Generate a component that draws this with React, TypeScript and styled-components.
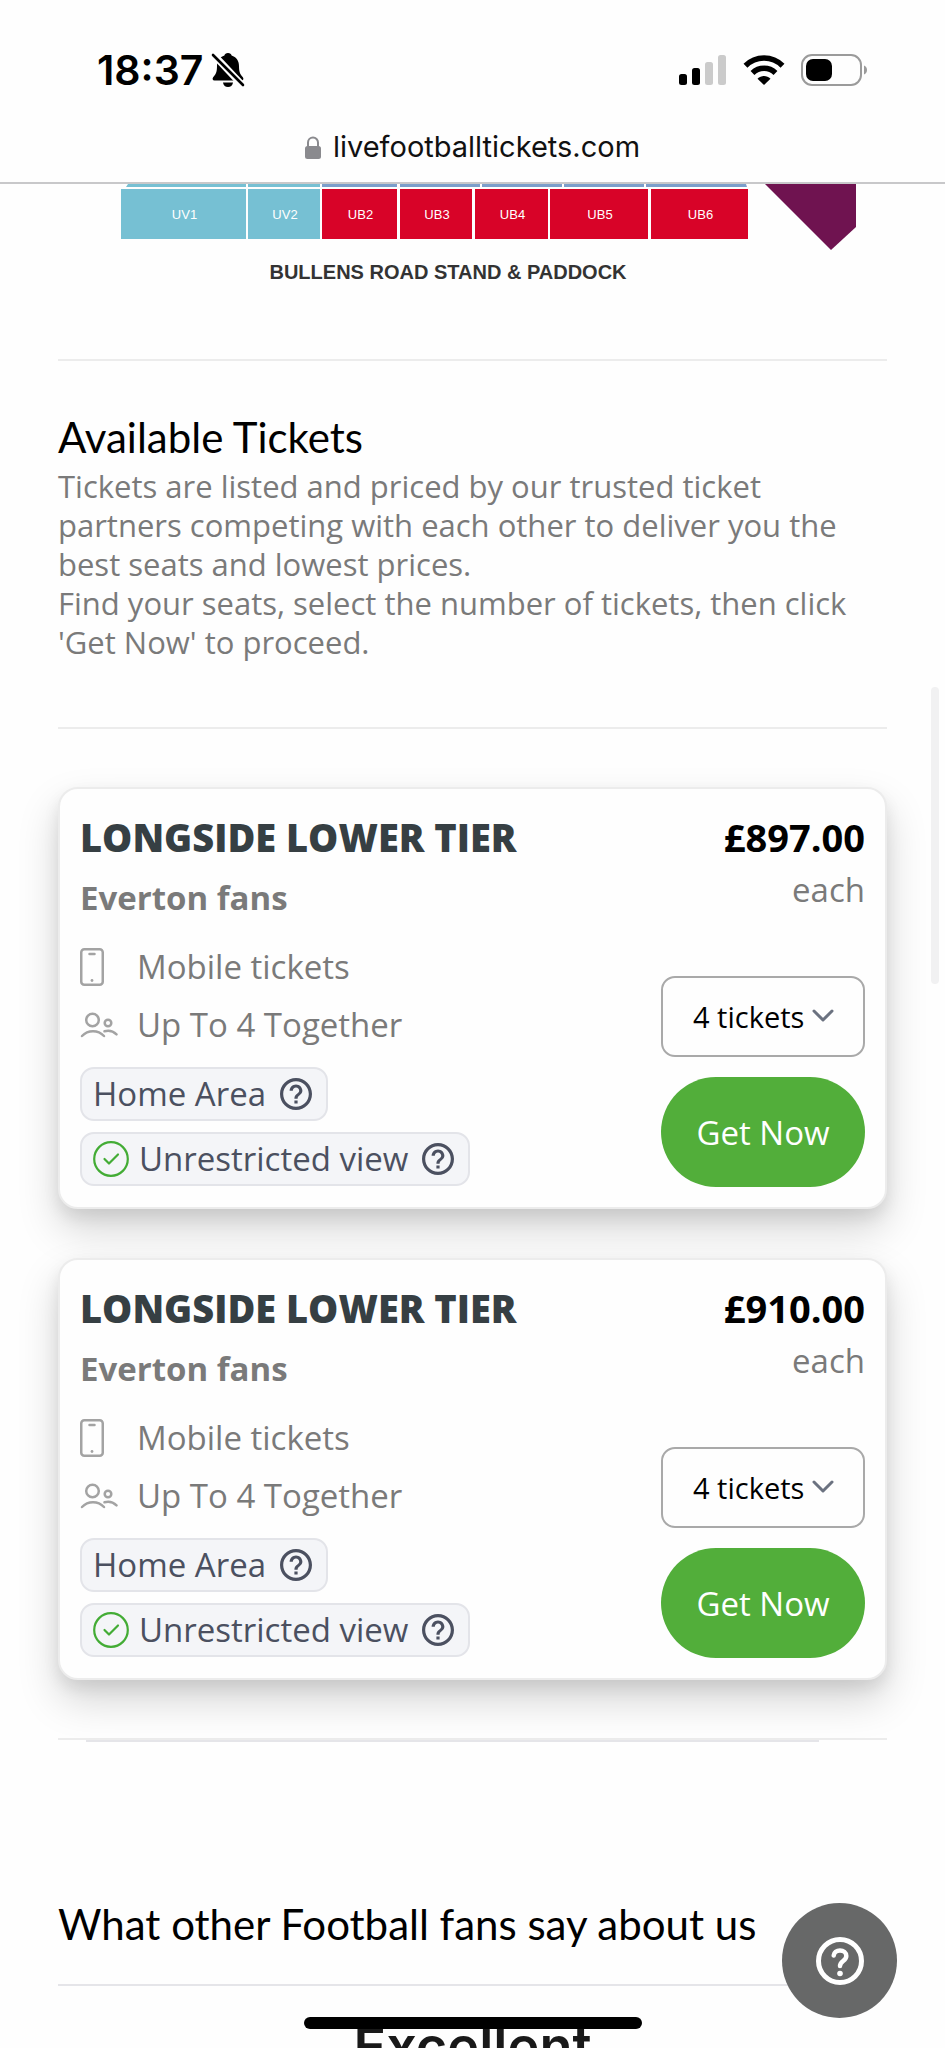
import React from "react";
import styled, { createGlobalStyle } from "styled-components";

const GlobalStyle = createGlobalStyle`
  *, *::before, *::after { box-sizing: border-box; }
  html, body { margin: 0; padding: 0; background: #fefefe; }
  h1, h2, h3, p, ul { margin: 0; padding: 0; }
  button, select { font-family: inherit; }
`;

const bodyFont = `"Open Sans", "Noto Sans", sans-serif`;
const systemFont = `Inter, "Liberation Sans", sans-serif`;
const displayFont = `Lato, "Open Sans", sans-serif`;

const Screen = styled.div`
  position: relative;
  display: flex;
  flex-direction: column;
  height: 100vh;
  overflow: hidden;
  background: #fefefe;
  font-family: ${bodyFont};
`;

const StatusBar = styled.header`
  display: flex;
  align-items: center;
  justify-content: space-between;
  height: 112px;
  padding: 28px 77px 0 97px;
  flex: none;
`;

const Clock = styled.div`
  display: flex;
  align-items: center;
  gap: 8px;
  font: 600 41px/48px ${systemFont};
  color: #000;
`;

const Indicators = styled.div`
  display: flex;
  align-items: center;
  gap: 16px;
`;

const AddressBar = styled.div`
  display: flex;
  align-items: center;
  justify-content: center;
  gap: 12px;
  height: 72px;
  border-bottom: 2px solid #c8c8ca;
  font: 400 29px/36px ${systemFont};
  color: #111;
  flex: none;
`;

const Page = styled.main`
  flex: 1;
  min-height: 0;
  overflow: hidden;
`;

const SeatMap = styled.svg`
  display: block;
  width: 100%;
`;

const Content = styled.div`
  padding: 0 58px;
`;

const Rule = styled.hr<{ $cool?: boolean }>`
  height: 2px;
  margin: 0;
  border: 0;
  background: ${(p) => (p.$cool ? "#e5e5e9" : "#ececec")};
`;

const InnerRule = styled(Rule)`
  margin: 0 68px 0 28px;
`;

const Intro = styled.section`
  padding: 46px 0 65px;
`;

const Heading = styled.h2`
  font: 400 42px/60px ${displayFont};
  color: #000;
`;

const Lead = styled.p`
  font-size: 31px;
  line-height: 39px;
  color: #7a7a7a;
`;

const TicketList = styled.section`
  display: flex;
  flex-direction: column;
  gap: 49px;
  padding: 58px 0;
`;

const Card = styled.article`
  display: flex;
  justify-content: space-between;
  min-height: 422px;
  padding: 20px;
  border: 2px solid #ececec;
  border-radius: 20px;
  background: #fefefe;
  box-shadow: 0 20px 40px rgba(0, 0, 0, 0.17), 0 8px 16px rgba(0, 0, 0, 0.08);
`;

const Details = styled.div`
  display: flex;
  flex-direction: column;
  align-items: flex-start;
`;

const Title = styled.h3`
  font-size: 38px;
  line-height: 56px;
  font-weight: 800;
  color: #363f43;
`;

const Team = styled.p`
  padding-top: 5px;
  font-size: 33px;
  line-height: 56px;
  font-weight: 700;
  color: #7a7a7a;
`;

const Features = styled.div`
  padding: 12px 0 13px;
`;

const Feature = styled.p`
  display: flex;
  align-items: center;
  font-size: 33px;
  line-height: 58px;
  color: #7a7a7a;
`;

const IconSlot = styled.span`
  display: flex;
  width: 57px;
`;

const Tags = styled.div`
  display: flex;
  flex-direction: column;
  align-items: flex-start;
  gap: 11px;
`;

const Tag = styled.div`
  display: flex;
  align-items: center;
  gap: 10px;
  height: 54px;
  padding: 0 14px 0 11px;
  border: 2px solid #e3e4e9;
  border-radius: 14px;
  background: #f4f5f8;
  font-size: 33px;
  line-height: 50px;
  color: #4b5060;
`;

const TagHelp = styled.svg`
  display: block;
  width: 32px;
  height: 32px;
  margin-left: 4px;
  fill: #4b5060;
`;

const Purchase = styled.div`
  display: flex;
  flex-direction: column;
  align-items: stretch;
  width: 204px;
`;

const Price = styled.p`
  font-size: 38px;
  line-height: 56px;
  font-weight: 700;
  color: #000;
  text-align: right;
`;

const Each = styled.p`
  font-size: 33px;
  line-height: 50px;
  color: #7a7a7a;
  text-align: right;
`;

const SelectBox = styled.div`
  position: relative;
  margin-top: auto;
`;

const Quantity = styled.select`
  appearance: none;
  display: block;
  width: 100%;
  height: 81px;
  padding: 0 0 0 30px;
  border: 2px solid #a9a9a9;
  border-radius: 14px;
  background: #fefefe;
  font-size: 29px;
  color: #000;
`;

const Chevron = styled.svg`
  position: absolute;
  right: 31px;
  top: 33px;
  pointer-events: none;
`;

const BuyButton = styled.button`
  height: 110px;
  margin-top: 20px;
  padding: 0;
  border: 0;
  border-radius: 55px;
  background: #52ae3a;
  font-size: 33px;
  color: #fff;
`;

const Reviews = styled.section`
  padding-top: 152px;
`;

const ReviewHeading = styled(Heading)`
  padding-bottom: 30px;
`;

const Rating = styled.p`
  padding-top: 29px;
  font: 600 54px/64px ${systemFont};
  color: #191919;
  text-align: center;
`;

const HelpButton = styled.button`
  position: absolute;
  right: 48px;
  bottom: 30px;
  display: flex;
  align-items: center;
  justify-content: center;
  width: 115px;
  height: 115px;
  padding: 0;
  border: 0;
  border-radius: 50%;
  background: #676868;
`;

const HomeIndicator = styled.div`
  position: absolute;
  left: 50%;
  bottom: 19px;
  width: 338px;
  height: 12px;
  border-radius: 6px;
  background: #000;
  transform: translateX(-50%);
`;

const ScrollThumb = styled.div`
  position: absolute;
  right: 6px;
  top: 687px;
  width: 8px;
  height: 297px;
  border-radius: 4px;
  background: #f1f1f2;
`;

const BellOff = () => (
  <svg width="34" height="36" viewBox="0 0 34 36" aria-hidden="true">
    <path d="M17 1c2 0 3.300 1.200 3.600 2.600 4.600 1.400 7.400 5.300 7.400 10.400 0 6 1.200 8.600 3.700 11 1.300 1.500.8 3.500-1.200 3.500H3.500c-2 0-2.500-2-1.200-3.500C4.800 22.600 6 20 6 14c0-5.100 2.800-9 7.400-10.400C13.700 2.200 15 1 17 1Z" />
    <path d="M12 30.500h10c-.5 3-2.300 4.500-5 4.500s-4.500-1.500-5-4.500Z" />
    <path d="M0 0l34 36" stroke="#fefefe" strokeWidth="7" />
    <path d="M2 3l30 30" stroke="#000" strokeWidth="2.600" strokeLinecap="round" />
  </svg>
);

const Signal = () => (
  <svg width="48" height="30" viewBox="0 0 48 30" aria-hidden="true">
    <rect x="0" y="19" width="8" height="11" rx="2.500" />
    <rect x="13" y="13" width="8" height="17" rx="2.500" />
    <rect x="26" y="7" width="8" height="23" rx="2.500" fill="#cbcbcb" />
    <rect x="39" y="0" width="8" height="30" rx="2.500" fill="#cbcbcb" />
  </svg>
);

const Wifi = () => (
  <svg width="42" height="30" viewBox="0 0 42 30" aria-hidden="true">
    <g fill="none" stroke="#000" strokeWidth="5.500">
      <path d="M2.500 10.800a26 26 0 0 1 37 0" />
      <path d="M9.500 18a16.500 16.500 0 0 1 23 0" />
    </g>
    <path d="M21 30l-6.500-6.300c3.700-3.600 9.300-3.600 13 0Z" />
  </svg>
);

const Battery = () => (
  <svg width="67" height="32" viewBox="0 0 67 32" aria-hidden="true">
    <rect x="1" y="1" width="59" height="30" rx="10" fill="none" stroke="#9b9b9b" strokeWidth="2" />
    <rect x="5" y="5" width="26" height="22" rx="7" />
    <path d="M63 11.500c4 1.500 4 7.500 0 9Z" fill="#9b9b9b" />
  </svg>
);

const Lock = () => (
  <svg width="16" height="23" viewBox="0 0 16 23" aria-hidden="true">
    <rect x="0" y="10" width="16" height="13" rx="2.500" fill="#8a8a8e" />
    <path d="M3 11V6.500a5 5 0 0 1 10 0V11" fill="none" stroke="#8a8a8e" strokeWidth="2" />
  </svg>
);

const Phone = () => (
  <svg width="24" height="38" viewBox="0 0 24 38" fill="none" stroke="#a3a3a3" strokeWidth="2.500" aria-hidden="true">
    <rect x="1.250" y="1.250" width="21.500" height="35.500" rx="3" />
    <path d="M9.500 6h5" strokeLinecap="round" />
    <circle cx="12" cy="32.500" r="1.400" fill="#a3a3a3" stroke="none" />
  </svg>
);

const People = () => (
  <svg width="38" height="26" viewBox="0 0 38 26" fill="none" stroke="#a3a3a3" strokeWidth="2.500" strokeLinecap="round" aria-hidden="true">
    <circle cx="12.500" cy="8" r="6.300" />
    <path d="M2 24c6-6.300 16-6.300 22 0" />
    <circle cx="28" cy="11" r="3.300" />
    <path d="M24.500 19.300c4.500-1.300 8.500-.3 12 3" />
  </svg>
);

const HelpOutline = () => (
  <TagHelp viewBox="2 2 20 20" aria-hidden="true">
    <path d="M11 18h2v-2h-2v2zm1-16C6.480 2 2 6.480 2 12s4.480 10 10 10 10-4.480 10-10S17.520 2 12 2zm0 18c-4.410 0-8-3.590-8-8s3.590-8 8-8 8 3.590 8 8-3.590 8-8 8zm0-14c-2.210 0-4 1.790-4 4h2c0-1.100.9-2 2-2s2 .9 2 2c0 2-3 1.750-3 5h2c0-2.250 3-2.500 3-5 0-2.210-1.790-4-4-4z" />
  </TagHelp>
);

const HelpRound = () => (
  <svg width="48" height="48" viewBox="0 0 48 48" fill="none" stroke="#fff" strokeLinecap="round" aria-hidden="true">
    <circle cx="24" cy="24" r="21.500" strokeWidth="5" />
    <path d="M17.700 18.500c.3-3.200 2.900-5 6.300-5s6.300 2.200 6.300 5.500c0 5-6.300 5-6.300 10" strokeWidth="4.500" />
    <circle cx="24" cy="36.500" r="2.800" fill="#fff" stroke="none" />
  </svg>
);

const Check = () => (
  <svg width="36" height="36" viewBox="0 0 36 36" fill="none" stroke="#43ac35" strokeWidth="2.200" aria-hidden="true">
    <circle cx="18" cy="18" r="16.800" />
    <path d="M11.500 18l4.500 4.500 9-9" strokeLinecap="round" strokeLinejoin="round" />
  </svg>
);

const blocks = [
  { name: "UV1", x: 121, w: 125, fill: "#76c0d3" },
  { name: "UV2", x: 248, w: 72, fill: "#76c0d3" },
  { name: "UB2", x: 322, w: 75, fill: "#d80328" },
  { name: "UB3", x: 400, w: 72, fill: "#d80328" },
  { name: "UB4", x: 475, w: 73, fill: "#d80328" },
  { name: "UB5", x: 550, w: 98, fill: "#d80328" },
  { name: "UB6", x: 651, w: 97, fill: "#d80328" },
];

const StadiumMap = () => (
  <SeatMap viewBox="0 184 945 175" role="img" aria-label="Bullens Road stand seating">
    <path d="M128 184h118v3H126ZM248 184h72v3h-72Z" fill="#76c0d3" />
    <path d="M322 184h75v3h-75ZM400 184h80v3h-80ZM482 184h80v3h-80ZM564 184h80v3h-80ZM646 184h100l1 3H646Z" fill="#7c9fcb" />
    {blocks.map((b) => (
      <g key={b.name}>
        <rect x={b.x} y="189" width={b.w} height="50" fill={b.fill} />
        <text x={b.x + b.w / 2 + 1} y="219" textAnchor="middle" fontFamily="Liberation Sans" fontSize="13" fill="#fff">
          {b.name}
        </text>
      </g>
    ))}
    <path d="M765 184h91v43l-25 23Z" fill="#6f1350" />
    <text x="448" y="279" textAnchor="middle" fontFamily="Liberation Sans" fontWeight="700" fontSize="20" fill="#333">
      BULLENS ROAD STAND &amp; PADDOCK
    </text>
  </SeatMap>
);

const TicketCard = ({ id, price }: { id: string; price: string }) => (
  <Card>
    <Details>
      <Title>LONGSIDE LOWER TIER</Title>
      <Team>Everton fans</Team>
      <Features>
        <Feature><IconSlot><Phone /></IconSlot>Mobile tickets</Feature>
        <Feature><IconSlot><People /></IconSlot>Up To 4 Together</Feature>
      </Features>
      <Tags>
        <Tag>Home Area<HelpOutline /></Tag>
        <Tag><Check />Unrestricted view<HelpOutline /></Tag>
      </Tags>
    </Details>
    <Purchase>
      <Price>{price}</Price>
      <Each>each</Each>
      <SelectBox>
        <Quantity id={id} aria-label="Number of tickets" defaultValue="4">
          <option value="1">1 ticket</option>
          <option value="2">2 tickets</option>
          <option value="3">3 tickets</option>
          <option value="4">4 tickets</option>
        </Quantity>
        <Chevron width="22" height="14" viewBox="0 0 22 14" fill="none" stroke="#6b7280" strokeWidth="3" strokeLinecap="round" strokeLinejoin="round" aria-hidden="true">
          <path d="M2 2l9 9 9-9" />
        </Chevron>
      </SelectBox>
      <BuyButton type="button">Get Now</BuyButton>
    </Purchase>
  </Card>
);

export default function App() {
  return (
    <>
      <GlobalStyle />
      <Screen>
        <StatusBar>
          <Clock>18:37<BellOff /></Clock>
          <Indicators><Signal /><Wifi /><Battery /></Indicators>
        </StatusBar>
        <AddressBar><Lock />livefootballtickets.com</AddressBar>
        <Page>
          <StadiumMap />
          <Content>
            <Rule />
            <Intro>
              <Heading>Available Tickets</Heading>
              <Lead>
                Tickets are listed and priced by our trusted ticket partners competing with each other to deliver you the best seats and lowest prices.
                <br />
                Find your seats, select the number of tickets, then click 'Get Now' to proceed.
              </Lead>
            </Intro>
            <Rule />
            <TicketList>
              <TicketCard id="quantity-1" price="£897.00" />
              <TicketCard id="quantity-2" price="£910.00" />
            </TicketList>
            <Rule />
            <InnerRule $cool />
            <Reviews>
              <ReviewHeading>What other Football fans say about us</ReviewHeading>
              <Rule $cool />
              <Rating>Excellent</Rating>
            </Reviews>
          </Content>
        </Page>
        <ScrollThumb />
        <HelpButton type="button" aria-label="Help"><HelpRound /></HelpButton>
        <HomeIndicator />
      </Screen>
    </>
  );
}
